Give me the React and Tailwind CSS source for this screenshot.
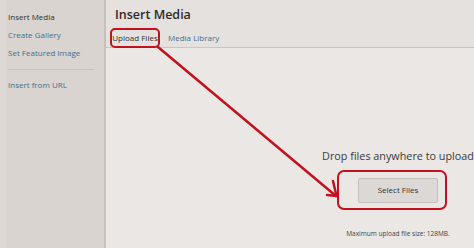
export default function App() {
  return (
    <div
      className="relative flex w-[474px] h-[248px] overflow-hidden bg-[#ebe7e4] text-[#333]"
      style={{ fontFamily: '"Open Sans", "Noto Sans", sans-serif' }}
    >
      <div className="w-[106px] shrink-0 flex bg-[#d9d4d0] border-r-2 border-[#c6c1bd]">
        <div className="w-[6px] bg-[#ddd8d5]" />
        <div className="flex-1 flex flex-col pt-[11px] pl-[2px] pr-[10px] text-[8px] leading-[12px]">
          <div className="text-[#2f2f2f]">Insert Media</div>
          <div className="mt-[6px] text-[#3f6f92]">Create Gallery</div>
          <div className="mt-[6px] text-[#3f6f92]">Set Featured Image</div>
          <div className="mt-[10px] h-px bg-[#c6c1bd]" />
          <div className="mt-[9px] text-[#3f6f92]">Insert from URL</div>
        </div>
      </div>
      <div className="flex-1 flex flex-col">
        <div className="h-[48px] shrink-0 bg-[#e5e1de] border-b border-[#c9c5c2] flex flex-col pl-[9px]">
          <div className="mt-[5px] text-[12.5px] leading-[20px] font-semibold text-[#2b2b2b]">Insert Media</div>
          <div className="mt-[3px] flex items-end gap-[8px]">
            <div className="h-[20px] w-[50px] -ml-[5px] border-[2.5px] border-[#c2121e] rounded-[5px] flex items-center justify-center text-[8px] text-[#2f2f2f]">
              Upload Files
            </div>
            <div className="h-[20px] flex items-center text-[8px] text-[#3f6f92]">Media Library</div>
          </div>
        </div>
        <div className="flex-1 flex flex-col items-center w-[220px] ml-[182px]">
          <div className="mt-[100px] text-[10.8px] leading-[16px] whitespace-nowrap text-[#3a3a3a]">
            Drop files anywhere to upload
          </div>
          <div className="mt-[6px] -ml-[12px] w-[110px] h-[40px] border-[2.5px] border-[#c2121e] rounded-[7px] flex items-center justify-end pr-[7px]">
            <div className="w-[80px] h-[25px] bg-[#dcd8d5] border border-[#c4c0bc] rounded-[2px] flex items-center justify-center text-[8px] text-[#333]">
              Select Files
            </div>
          </div>
          <div className="mt-[20px] text-[6.5px] leading-[8px] text-[#444] whitespace-nowrap">
            Maximum upload file size: 128MB.
          </div>
        </div>
      </div>
      <svg className="absolute left-0 top-0 pointer-events-none" width="474" height="248" viewBox="0 0 474 248">
        <line x1="158" y1="47" x2="336" y2="196" stroke="#c2121e" strokeWidth="2.5" strokeLinecap="round" />
        <polyline points="333,181 336.5,196 327,195" fill="none" stroke="#c2121e" strokeWidth="2.5" strokeLinecap="round" strokeLinejoin="round" />
      </svg>
    </div>
  );
}
